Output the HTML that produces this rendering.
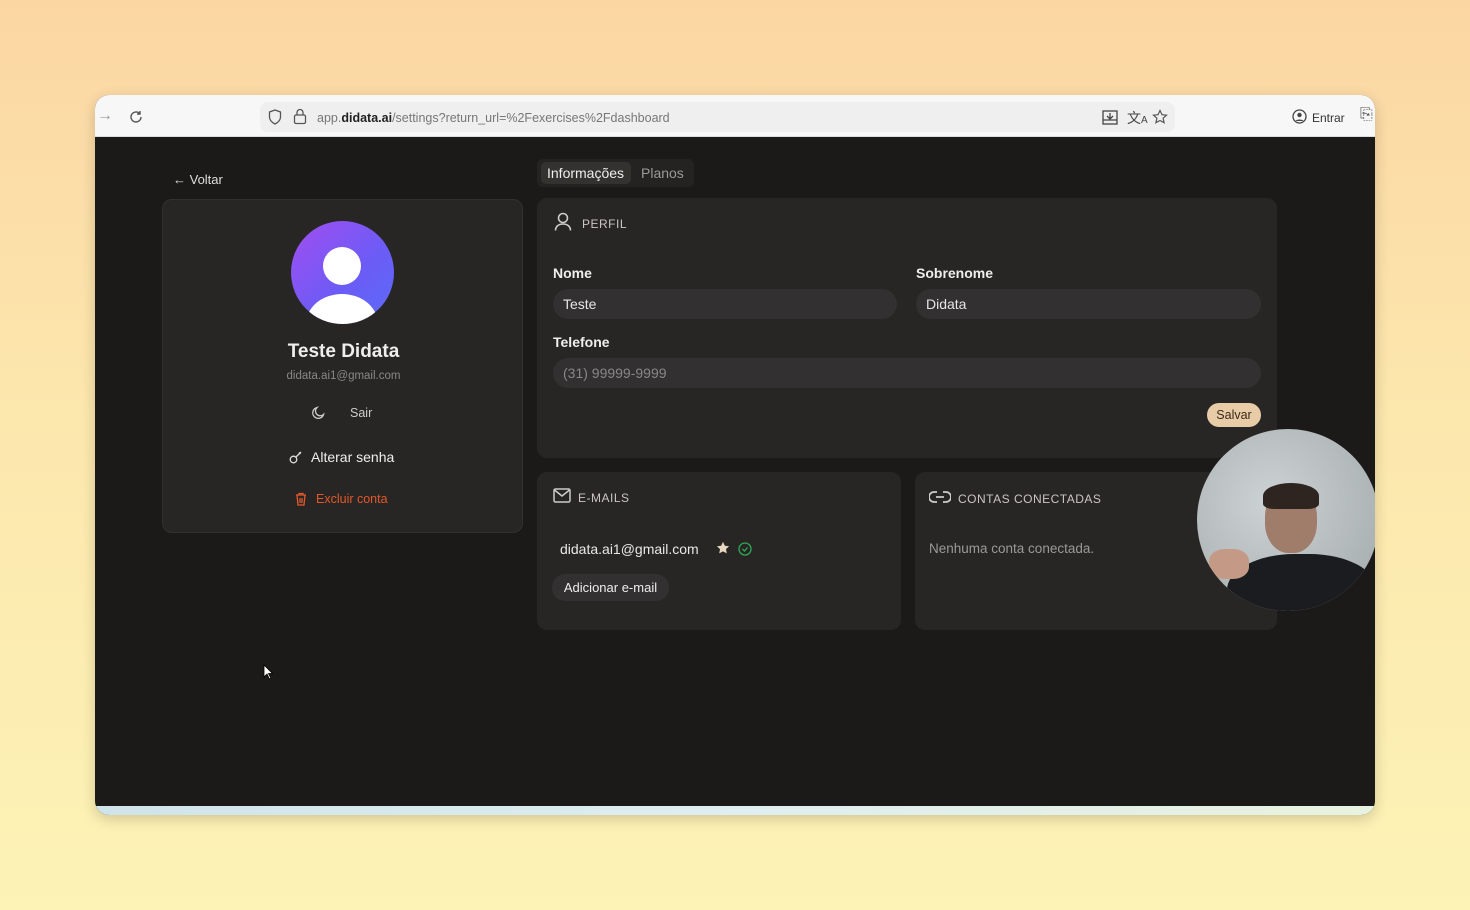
<!DOCTYPE html>
<html><head><meta charset="utf-8"><style>
*{box-sizing:border-box;margin:0;padding:0}
body{width:1470px;height:910px;overflow:hidden;background:linear-gradient(180deg,#fbd6a3 0%,#fce7ad 45%,#fdf3b6 100%);font-family:"Liberation Sans",sans-serif;position:relative}
.win{position:absolute;left:95px;top:95px;width:1280px;height:720px;border-radius:14px;overflow:hidden;background:#1c1a18;box-shadow:0 4px 14px rgba(0,0,0,.18)}
.bar{position:absolute;left:0;top:0;width:1280px;height:42px;background:#f7f7f7;border-bottom:1px solid #ddd}
.url{position:absolute;left:165px;top:7px;width:915px;height:30px;background:#efefef;border-radius:8px}
.t{position:absolute;white-space:nowrap}
.card{position:absolute;background:#282624;border-radius:10px}
.inp{position:absolute;height:30px;background:#323030;border-radius:15px;color:#e6e6e6;font-size:14px;line-height:30px;padding-left:10px}
.lbl{color:#eee;font-size:14px;font-weight:bold}
.hd{color:#c9c6c2;font-size:12px;letter-spacing:.5px}
</style></head><body>
<div class="win">
 <div class="bar">
  <div class="t" style="left:2px;top:12px;color:#999;font-size:16px">→</div>
  <svg class="t" style="left:33px;top:14px" width="16" height="16" viewBox="0 0 16 16"><path d="M13 8a5 5 0 1 1-1.5-3.6M12 2v3h-3" fill="none" stroke="#555" stroke-width="1.4"/></svg>
  <div class="url"></div>
  <svg class="t" style="left:173px;top:14px" width="14" height="16" viewBox="0 0 14 16"><path d="M7 1L1.5 3v5c0 3 2.5 5.5 5.5 7 3-1.5 5.5-4 5.5-7V3z" fill="none" stroke="#555" stroke-width="1.3"/></svg>
  <svg class="t" style="left:198px;top:13px" width="14" height="17" viewBox="0 0 14 17"><rect x="1.5" y="7" width="11" height="8.5" rx="1.5" fill="none" stroke="#555" stroke-width="1.3"/><path d="M4 7V4.5a3 3 0 0 1 6 0V7" fill="none" stroke="#555" stroke-width="1.3"/></svg>
  <div class="t" style="left:222px;top:16px;font-size:12.5px;color:#777">app.<b style="color:#222">didata.ai</b>/settings?return_url=%2Fexercises%2Fdashboard</div>
  <svg class="t" style="left:1007px;top:15px" width="16" height="15" viewBox="0 0 16 15"><rect x="1" y="1" width="14" height="13" fill="none" stroke="#444" stroke-width="1.3"/><path d="M8 3v6M5 6l3 3 3-3M1 10h14" fill="none" stroke="#444" stroke-width="1.3"/></svg>
  <div class="t" style="left:1032px;top:13px;font-size:14px;color:#444">文<span style="font-size:10px">A</span></div>
  <svg class="t" style="left:1057px;top:14px" width="16" height="16" viewBox="0 0 16 16"><path d="M8 1.5l2 4.2 4.5.5-3.4 3 1 4.5L8 11.5l-4.1 2.2 1-4.5-3.4-3 4.5-.5z" fill="none" stroke="#555" stroke-width="1.2"/></svg>
  <svg class="t" style="left:1197px;top:14px" width="15" height="15" viewBox="0 0 15 15"><circle cx="7.5" cy="7.5" r="6.5" fill="none" stroke="#444" stroke-width="1.3"/><circle cx="7.5" cy="6" r="2.2" fill="#444"/><path d="M3.5 12c1-2 7-2 8 0" fill="#444"/></svg>
  <div class="t" style="left:1217px;top:16px;font-size:12px;color:#333">Entrar</div>
  <div class="t" style="left:1265px;top:11px;font-size:16px;color:#555">⎘</div>
 </div>
 <div class="t" style="left:78px;top:77px;color:#ddd;font-size:13px">← Voltar</div>
 <div class="card" style="left:67px;top:104px;width:361px;height:334px;border:1px solid #33312f">
  <div class="t" style="left:128px;top:21px;width:103px;height:103px;border-radius:50%;background:linear-gradient(135deg,#a24ef0,#6a5cf6 60%,#5c6cf8);overflow:hidden">
   <div class="t" style="left:32px;top:26px;width:38px;height:38px;border-radius:50%;background:#fff"></div>
   <div class="t" style="left:15px;top:73px;width:72px;height:60px;border-radius:50%;background:#fff"></div>
  </div>
  <div class="t" style="left:0;width:361px;text-align:center;top:141px;color:#eee;font-size:19px;font-weight:bold">Teste Didata</div>
  <div class="t" style="left:0;width:361px;text-align:center;top:170px;color:#888;font-size:11.5px">didata.ai1@gmail.com</div>
  <svg class="t" style="left:148px;top:206px" width="14" height="14" viewBox="0 0 14 14"><path d="M6 1.5a5.5 5.5 0 1 0 6.5 7A4.5 4.5 0 0 1 6 1.5z" fill="none" stroke="#ccc" stroke-width="1.3"/></svg>
  <div class="t" style="left:187px;top:206px;color:#ccc;font-size:12.5px">Sair</div>
  <svg class="t" style="left:126px;top:250px" width="14" height="14" viewBox="0 0 14 14"><circle cx="4.5" cy="9.5" r="3.3" fill="none" stroke="#ddd" stroke-width="1.3"/><path d="M7 7l5-5M10 2.5l1.5 1.5" fill="none" stroke="#ddd" stroke-width="1.3"/></svg>
  <div class="t" style="left:148px;top:249px;color:#eee;font-size:14px">Alterar senha</div>
  <svg class="t" style="left:132px;top:292px" width="12" height="14" viewBox="0 0 12 14"><path d="M1 3h10M4 3V1.5h4V3M2 3l1 10h6l1-10M5 6v5M7 6v5" fill="none" stroke="#e2582a" stroke-width="1.3"/></svg>
  <div class="t" style="left:153px;top:292px;color:#e2582a;font-size:12.5px">Excluir conta</div>
 </div>
 <div class="t" style="left:442px;top:64px;width:157px;height:28px;background:#252321;border-radius:6px"></div>
 <div class="t" style="left:446px;top:67px;width:90px;height:22px;background:#34322f;border-radius:5px"></div>
 <div class="t" style="left:452px;top:70px;color:#eee;font-size:14px">Informações</div>
 <div class="t" style="left:546px;top:70px;color:#999;font-size:14px">Planos</div>
 <div class="card" style="left:442px;top:103px;width:740px;height:260px">
  <svg class="t" style="left:17px;top:14px" width="18" height="19" viewBox="0 0 18 19"><circle cx="9" cy="6" r="4.5" fill="none" stroke="#ccc" stroke-width="1.6"/><path d="M1.5 18.5c0-4 3-6.5 7.5-6.5s7.5 2.5 7.5 6.5" fill="none" stroke="#ccc" stroke-width="1.6"/></svg>
  <div class="t hd" style="left:45px;top:19px">PERFIL</div>
  <div class="t lbl" style="left:16px;top:67px">Nome</div>
  <div class="t lbl" style="left:379px;top:67px">Sobrenome</div>
  <div class="inp" style="left:16px;top:91px;width:344px">Teste</div>
  <div class="inp" style="left:379px;top:91px;width:345px">Didata</div>
  <div class="t lbl" style="left:16px;top:136px">Telefone</div>
  <div class="inp" style="left:16px;top:160px;width:708px;color:#888">(31) 99999-9999</div>
  <div class="t" style="left:670px;top:205px;width:54px;height:24px;border-radius:12px;background:#e8cca8;color:#3a2a18;font-size:12.5px;line-height:24px;text-align:center">Salvar</div>
 </div>
 <div class="card" style="left:442px;top:377px;width:364px;height:158px">
  <svg class="t" style="left:16px;top:16px" width="18" height="15" viewBox="0 0 18 15"><rect x="1" y="1" width="16" height="13" rx="1.5" fill="none" stroke="#ccc" stroke-width="1.5"/><path d="M1.5 2l7.5 6 7.5-6" fill="none" stroke="#ccc" stroke-width="1.5"/></svg>
  <div class="t hd" style="left:41px;top:19px">E-MAILS</div>
  <div class="t" style="left:23px;top:69px;color:#e8e8e8;font-size:14px">didata.ai1@gmail.com</div>
  <svg class="t" style="left:179px;top:69px" width="14" height="14" viewBox="0 0 16 16"><path d="M8 1l2.1 4.4 4.8.6-3.5 3.3.9 4.8L8 11.8l-4.3 2.3.9-4.8L1.1 6l4.8-.6z" fill="#e8d8c0"/></svg>
  <svg class="t" style="left:201px;top:70px" width="14" height="14" viewBox="0 0 14 14"><circle cx="7" cy="7" r="6" fill="none" stroke="#2faa55" stroke-width="1.3"/><path d="M4.5 7l2 2 3-3.5" fill="none" stroke="#2faa55" stroke-width="1.3"/></svg>
  <div class="t" style="left:15px;top:102px;width:117px;height:27px;border-radius:13px;background:#323030;color:#eee;font-size:13px;line-height:27px;text-align:center">Adicionar e-mail</div>
 </div>
 <div class="card" style="left:820px;top:377px;width:362px;height:158px">
  <svg class="t" style="left:14px;top:18px" width="22" height="14" viewBox="0 0 22 14"><path d="M8 2H5a5 5 0 0 0 0 10h3M14 2h3a5 5 0 0 1 0 10h-3M7 7h8" fill="none" stroke="#ccc" stroke-width="1.8"/></svg>
  <div class="t hd" style="left:43px;top:20px">CONTAS CONECTADAS</div>
  <div class="t" style="left:14px;top:69px;color:#999;font-size:13.5px">Nenhuma conta conectada.</div>
 </div>
 <div class="t" style="left:1102px;top:334px;width:182px;height:182px;border-radius:50%;background:radial-gradient(circle at 40% 40%,#cdd2d4,#a9b0b2 80%);overflow:hidden">
  <div class="t" style="left:68px;top:58px;width:52px;height:66px;border-radius:45%;background:#a07d6a"></div>
  <div class="t" style="left:66px;top:54px;width:56px;height:26px;border-radius:50% 50% 20% 20%;background:#2e2520"></div>
  <div class="t" style="left:30px;top:125px;width:150px;height:80px;border-radius:45% 45% 0 0;background:#1a1c20"></div>
  <div class="t" style="left:12px;top:120px;width:40px;height:30px;border-radius:40%;background:#c49a86"></div>
 </div>
 <div class="t" style="left:0;top:711px;width:1280px;height:9px;background:linear-gradient(90deg,#cfe4ea,#dfeef0,#e8f2e0)"></div>
</div>
<svg class="t" style="left:263px;top:664px" width="10" height="16" viewBox="0 0 10 16"><path d="M1 1v12l3-3 2.5 5 1.5-.8L5.5 9.5H9.5z" fill="#fff" stroke="#000" stroke-width=".8"/></svg>
</body></html>
